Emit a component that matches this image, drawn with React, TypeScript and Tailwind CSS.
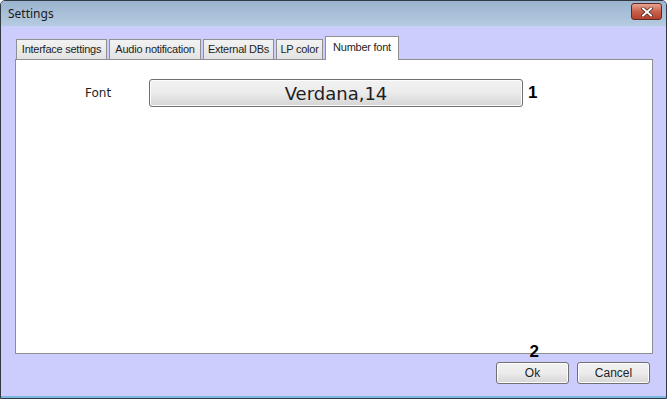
import React, { useState } from 'react';

const tabs = [
  { label: 'Interface settings', w: 'w-[91px]' },
  { label: 'Audio notification', w: 'w-[92px]' },
  { label: 'External DBs', w: 'w-[71px]' },
  { label: 'LP color', w: 'w-[47px]' },
  { label: 'Number font', w: 'w-[74px]' },
];

export default function App() {
  const [active, setActive] = useState(4);

  return (
    <div
      className="w-[667px] h-[399px] bg-[#cdcdfd] border border-[#2f3a45] rounded-t-[5px] flex flex-col overflow-hidden text-black"
      style={{ fontFamily: '"Liberation Sans", Arial, sans-serif' }}
    >
      {/* title bar */}
      <div className="h-[25px] shrink-0 flex items-center justify-between pl-[7px] pr-[4px] bg-gradient-to-b from-[#9bb4cf] to-[#b4cbe0]">
        <span className="text-[12px] text-[#1a1a1a]" style={{ fontFamily: '"Noto Sans", sans-serif' }}>Settings</span>
        <button className="w-[31px] h-[17px] -mt-[4px] rounded-[3px] border border-[#5e2a22] bg-gradient-to-b from-[#e8a493] via-[#c9604a] to-[#b5412b] flex items-center justify-center">
          <svg width="12" height="10" viewBox="0 0 12 10">
            <path d="M2 1.5 L10 8.5 M10 1.5 L2 8.5" stroke="#3a1a14" strokeWidth="3.2" strokeLinecap="square" />
            <path d="M2 1.5 L10 8.5 M10 1.5 L2 8.5" stroke="#ffffff" strokeWidth="2" strokeLinecap="square" />
          </svg>
        </button>
      </div>

      <div className="flex-1 flex flex-col px-[14px] pt-[10px]">
        {/* tabs */}
        <div className="flex items-end gap-[2px] h-[23px] pl-[1px]">
          {tabs.map((t, i) =>
            i === active ? (
              <button
                key={t.label}
                onClick={() => setActive(i)}
                className={`${t.w} relative z-10 -mb-px h-[24px] pb-[3px] bg-white border border-b-0 border-[#8e8f8f] text-[11px] tracking-[-0.25px] text-[#1e1e1e] whitespace-nowrap`}
              >
                {t.label}
              </button>
            ) : (
              <button
                key={t.label}
                onClick={() => setActive(i)}
                className={`${t.w} h-[20px] bg-gradient-to-b from-[#f2f2f2] to-[#e3e3e3] border border-b-0 border-[#8e8f8f] text-[11px] tracking-[-0.25px] text-[#1e1e1e] whitespace-nowrap`}
              >
                {t.label}
              </button>
            )
          )}
        </div>

        {/* panel */}
        <div className="h-[295px] w-[638px] bg-white border border-[#8e8f8f] flex flex-col">
          <div className="flex items-center mt-[19px]">
            <span className="w-[133px] pl-[69px] text-[12px] text-[#1e1e1e]" style={{ fontFamily: '"DejaVu Sans", Verdana, sans-serif' }}>
              Font
            </span>
            <button
              className="w-[374px] h-[28px] rounded-[3px] border border-[#707070] bg-gradient-to-b from-[#f2f2f2] via-[#ebebeb] to-[#d4d4d4] text-[18px] text-[#1e1e1e] shadow-[inset_0_0_0_1px_#fcfcfc]"
              style={{ fontFamily: '"DejaVu Sans", Verdana, sans-serif' }}
            >
              Verdana,14
            </button>
            <span className="ml-[5px] text-[17px] font-bold">1</span>
          </div>
        </div>

        {/* footer */}
        <div className="relative flex justify-end gap-[8px] mt-[8px] pr-[2px]">
          <span className="absolute right-[113px] -top-[19px] text-[17px] font-bold leading-none">2</span>
          <button className="w-[73px] h-[22px] rounded-[3px] border border-[#707070] bg-gradient-to-b from-[#f2f2f2] via-[#ebebeb] to-[#d6d6d6] text-[12px] text-[#1e1e1e] shadow-[inset_0_0_0_1px_#fcfcfc]">
            Ok
          </button>
          <button className="w-[73px] h-[22px] rounded-[3px] border border-[#707070] bg-gradient-to-b from-[#f2f2f2] via-[#ebebeb] to-[#d6d6d6] text-[12px] text-[#1e1e1e] shadow-[inset_0_0_0_1px_#fcfcfc]">
            Cancel
          </button>
        </div>
      </div>
      <div className="h-[2px] bg-[#7ab8e0] shrink-0" />
    </div>
  );
}
